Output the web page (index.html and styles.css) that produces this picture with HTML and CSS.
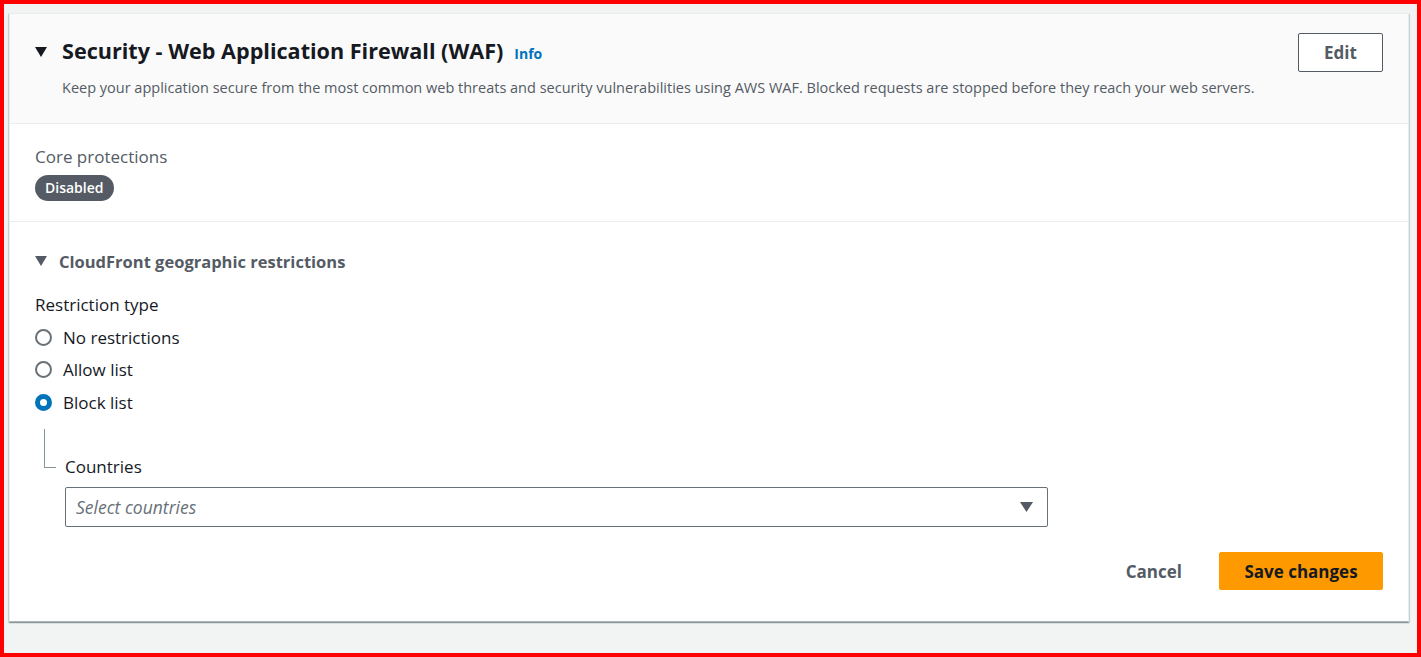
FILE: index.html
```html
<!DOCTYPE html>
<html lang="en">
<head>
<meta charset="utf-8">
<title>Security - Web Application Firewall (WAF)</title>
<link rel="stylesheet" href="styles.css">
</head>
<body>
<div class="frame">
  <section class="card">
    <header class="card-header">
      <div class="header-main">
        <div class="title-row">
          <svg class="caret caret-dark" width="12" height="10" viewBox="0 0 12 10"><polygon points="0,0 12,0 6,10"/></svg>
          <h2 class="title">Security - Web Application Firewall (WAF)</h2>
          <a class="info" href="#">Info</a>
        </div>
        <p class="desc">Keep your application secure from the most common web threats and security vulnerabilities using AWS WAF. Blocked requests are stopped before they reach your web servers.</p>
      </div>
      <button class="btn btn-normal" type="button">Edit</button>
    </header>

    <div class="section core">
      <div class="kv-label">Core protections</div>
      <span class="badge">Disabled</span>
    </div>

    <div class="section geo">
      <div class="sub-heading">
        <svg class="caret caret-gray" width="12" height="10" viewBox="0 0 12 10"><polygon points="0,0 12,0 6,10"/></svg>
        <span>CloudFront geographic restrictions</span>
      </div>
      <div class="field-label">Restriction type</div>
      <div class="radios">
        <label class="radio"><span class="dot"></span><span>No restrictions</span></label>
        <label class="radio"><span class="dot"></span><span>Allow list</span></label>
        <label class="radio"><span class="dot checked"></span><span>Block list</span></label>
      </div>
      <div class="nested">
        <div class="connector"></div>
        <div class="nested-field">
          <div class="field-label">Countries</div>
          <div class="select">
            <span class="placeholder">Select countries</span>
            <svg class="caret caret-gray" width="13" height="10" viewBox="0 0 13 10"><polygon points="0,0 13,0 6.5,10"/></svg>
          </div>
        </div>
      </div>
      <div class="actions">
        <button class="btn btn-link" type="button">Cancel</button>
        <button class="btn btn-primary" type="button">Save changes</button>
      </div>
    </div>
  </section>
</div>
</body>
</html>
```

FILE: styles.css
```css
* { box-sizing: border-box; }
html, body { margin: 0; padding: 0; }
body {
  font-family: "Open Sans", Roboto, "Liberation Sans", sans-serif;
  color: #16191f;
}
.frame {
  width: 1421px;
  height: 657px;
  border: 4px solid #ff0000;
  background: #f2f3f3;
  padding: 9px 0 0 5px;
  overflow: hidden;
}
.card {
  width: 1400px;
  background: #ffffff;
  border: 1px solid #eaeded;
  border-bottom-color: #aab7b8;
  box-shadow: 0 1px 1px 0 rgba(0, 28, 36, 0.25), 1px 1px 1px 0 rgba(0, 28, 36, 0.12), -1px 1px 1px 0 rgba(0, 28, 36, 0.12);
}
.card-header {
  background: #fafafa;
  border-bottom: 1px solid #eaeded;
  padding: 19px 25px 25px 25px;
  display: flex;
  justify-content: space-between;
  align-items: flex-start;
}
.title-row {
  display: flex;
  align-items: center;
  height: 36px;
}
.caret { display: block; flex: none; }
.caret-dark { fill: #16191f; }
.caret-gray { fill: #545b64; }
.title-row .caret { margin-right: 15px; margin-top: 1px; }
.title {
  margin: 0;
  font-size: 21.6px;
  font-weight: 700;
  line-height: 36px;
  color: #16191f;
}
.info {
  margin-left: 11px;
  margin-top: 4px;
  font-size: 14px;
  font-weight: 700;
  color: #0073bb;
  text-decoration: none;
}
.desc {
  margin: 9px 0 0 27px;
  font-size: 14.5px;
  line-height: 20px;
  color: #545b64;
}
.btn {
  font-family: inherit;
  font-size: 17px;
  font-weight: 700;
  border-radius: 2px;
  cursor: pointer;
  background: none;
}
.btn-normal {
  width: 85px;
  height: 39px;
  border: 1px solid #545b64;
  background: #ffffff;
  color: #545b64;
  margin-top: 0;
}
.section { padding: 0 25px; }
.core {
  padding-top: 22px;
  padding-bottom: 20px;
  border-bottom: 1px solid #eaeded;
}
.kv-label {
  font-size: 17px;
  line-height: 22px;
  color: #545b64;
}
.badge {
  display: inline-block;
  margin-top: 7px;
  height: 26px;
  line-height: 26px;
  padding: 0 10px;
  border-radius: 13px;
  background: #545b64;
  color: #ffffff;
  font-size: 14px;
  font-weight: 600;
}
.geo { padding-top: 28px; padding-bottom: 31px; }
.sub-heading {
  display: flex;
  align-items: center;
  height: 22px;
  font-size: 16.5px;
  font-weight: 700;
  color: #545b64;
}
.sub-heading .caret { margin-right: 12px; }
.field-label {
  font-size: 17px;
  line-height: 22px;
  color: #16191f;
}
.geo > .field-label { margin-top: 22px; }
.radios {
  margin-top: 5px;
  display: flex;
  flex-direction: column;
}
.radio {
  display: flex;
  align-items: center;
  height: 32.5px;
  font-size: 17px;
  color: #16191f;
}
.dot {
  width: 17px;
  height: 17px;
  border-radius: 50%;
  border: 2px solid #687078;
  margin-right: 11px;
  flex: none;
}
.dot.checked {
  border: 5px solid #0073bb;
  background: #ffffff;
}
.nested {
  display: flex;
  margin-top: 10.5px;
}
.connector {
  margin-left: 9px;
  width: 12px;
  height: 39px;
  border-left: 1px solid #879596;
  border-bottom: 1px solid #879596;
  flex: none;
}
.nested-field {
  margin-left: 9px;
  padding-top: 27px;
}
.nested-field .field-label { margin-bottom: 9px; }
.select {
  width: 983px;
  height: 40px;
  border: 1px solid #687078;
  border-radius: 2px;
  display: flex;
  align-items: center;
  justify-content: space-between;
  padding: 0 14px 0 10px;
  background: #ffffff;
}
.placeholder {
  font-size: 17.5px;
  font-style: italic;
  color: #687078;
}
.actions {
  margin-top: 25px;
  display: flex;
  justify-content: flex-end;
  align-items: center;
}
.btn-link {
  border: none;
  color: #545b64;
  padding: 0 20px;
  height: 38px;
  margin-right: 17px;
}
.btn-primary {
  width: 164px;
  height: 38px;
  border: 1px solid #ff9900;
  background: #ff9900;
  color: #16191f;
}
```
